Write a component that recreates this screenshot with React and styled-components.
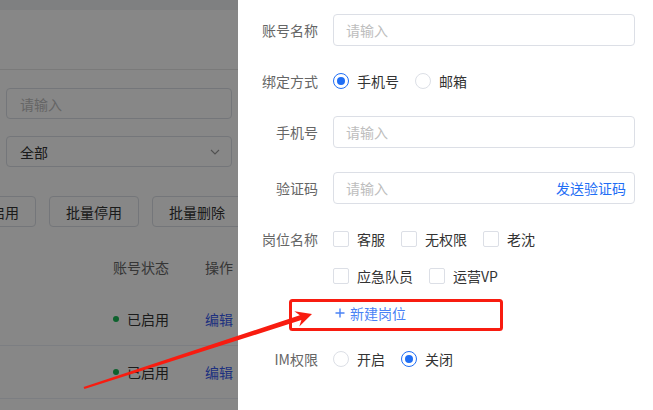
import React from 'react';
import styled, { createGlobalStyle } from 'styled-components';

const blue = '#1f6ef5';

const GlobalStyle = createGlobalStyle`
  html, body {
    margin: 0;
    padding: 0;
    width: 653px;
    height: 410px;
    overflow: hidden;
    background: #fff;
  }
  body {
    font-family: "Noto Sans CJK SC", "Noto Sans", sans-serif;
    font-size: 14px;
    color: #333;
  }
  * { box-sizing: border-box; }
`;

function Chevron() {
  return (
    <svg width="12" height="12" viewBox="0 0 12 12">
      <polyline points="2,4 6,8 10,4" fill="none" stroke="#999" strokeWidth="1.1" />
    </svg>
  );
}

function Plus() {
  return (
    <svg width="10" height="10" viewBox="0 0 10 10">
      <path d="M5 0.5V9.5M0.5 5H9.5" stroke="#4a82f5" strokeWidth="1.4" />
    </svg>
  );
}

function Annotation() {
  return (
    <Marks viewBox="0 0 653 410">
      <rect x="290.5" y="300.5" width="211" height="29" rx="2" fill="none" stroke="#f81c10" strokeWidth="3" />
      <polygon
        fill="#f81c10"
        points="84.4,389 83.6,387 299.8,315.3 294.3,311.3 312,314 299.3,326.5 301.4,320.1"
      />
    </Marks>
  );
}

const rows = [1, 2];

export default function App() {
  return (
    <Page>
      <GlobalStyle />
      <TopStrip />
      <Header />
      <Filters>
        <FilterBox $muted>请输入</FilterBox>
        <FilterBox>
          全部
          <Chevron />
        </FilterBox>
      </Filters>
      <Toolbar>
        <BatchButton>批量启用</BatchButton>
        <BatchButton>批量停用</BatchButton>
        <BatchButton>批量删除</BatchButton>
      </Toolbar>
      <Table>
        <TableRow $head>
          <span />
          <span>账号状态</span>
          <span>操作</span>
        </TableRow>
        {rows.map((r) => (
          <TableRow key={r}>
            <span />
            <Status>
              <Dot />
              已启用
            </Status>
            <EditLink>编辑</EditLink>
          </TableRow>
        ))}
      </Table>

      <Mask />

      <Drawer>
        <FormItem $mb={19}>
          <Label>账号名称</Label>
          <Control>
            <TextBox>
              <Placeholder>请输入</Placeholder>
            </TextBox>
          </Control>
        </FormItem>

        <FormItem $mb={19}>
          <Label>绑定方式</Label>
          <Control>
            <ChoiceLine>
              <Choice>
                <Radio $on />
                手机号
              </Choice>
              <Choice>
                <Radio />
                邮箱
              </Choice>
            </ChoiceLine>
          </Control>
        </FormItem>

        <FormItem $mb={24}>
          <Label>手机号</Label>
          <Control>
            <TextBox>
              <Placeholder>请输入</Placeholder>
            </TextBox>
          </Control>
        </FormItem>

        <FormItem $mb={19}>
          <Label>验证码</Label>
          <Control>
            <TextBox>
              <Placeholder>请输入</Placeholder>
              <SendCode>发送验证码</SendCode>
            </TextBox>
          </Control>
        </FormItem>

        <FormItem $mb={14}>
          <Label>岗位名称</Label>
          <Control>
            <ChoiceLine $gap>
              <Choice><Check />客服</Choice>
              <Choice><Check />无权限</Choice>
              <Choice><Check />老沈</Choice>
            </ChoiceLine>
            <ChoiceLine $gap>
              <Choice><Check />应急队员</Choice>
              <Choice><Check />运营VP</Choice>
            </ChoiceLine>
            <AddLink>
              <Plus />
              新建岗位
            </AddLink>
          </Control>
        </FormItem>

        <FormItem $mb={0}>
          <Label>IM权限</Label>
          <Control>
            <ChoiceLine>
              <Choice>
                <Radio />
                开启
              </Choice>
              <Choice>
                <Radio $on />
                关闭
              </Choice>
            </ChoiceLine>
          </Control>
        </FormItem>
      </Drawer>

      <Annotation />
    </Page>
  );
}

const Page = styled.div`
  position: relative;
  width: 653px;
  height: 410px;
  overflow: hidden;
  background: #fff;
`;

const TopStrip = styled.div`
  height: 10px;
  background: #f0f1f3;
`;

const Header = styled.div`
  height: 60px;
  background: #fff;
  border-bottom: 1px solid #e6e6e6;
`;

const Filters = styled.div`
  display: flex;
  flex-direction: column;
  gap: 17px;
  width: 232px;
  padding: 18px 0 0 6px;
`;

const FilterBox = styled.div`
  height: 31px;
  border: 1px solid #dcdfe6;
  border-radius: 4px;
  padding: 0 10px 0 13px;
  display: flex;
  align-items: center;
  justify-content: space-between;
  line-height: 20px;
  color: ${(p) => (p.$muted ? '#c0c0c0' : '#333')};
`;

const Toolbar = styled.div`
  display: flex;
  gap: 13px;
  margin: 29px 0 0 -54px;
`;

const BatchButton = styled.div`
  flex: none;
  width: 90px;
  height: 31px;
  border: 1px solid #dcdfe6;
  border-radius: 4px;
  display: flex;
  align-items: center;
  justify-content: center;
  color: #333;
  line-height: 20px;
`;

const Table = styled.div`
  margin-top: 13px;
`;

const TableRow = styled.div`
  display: grid;
  grid-template-columns: 113px 92px 1fr;
  align-items: center;
  height: 53px;
  border-bottom: ${(p) => (p.$head ? 'none' : '1px solid #ebeef5')};
  color: ${(p) => (p.$head ? '#666' : '#333')};
  line-height: 20px;
`;

const Status = styled.span`
  display: flex;
  align-items: center;
  gap: 8px;
`;

const Dot = styled.span`
  width: 6px;
  height: 6px;
  border-radius: 50%;
  background: #19b955;
`;

const EditLink = styled.span`
  color: #3a5cf0;
`;

const Mask = styled.div`
  position: absolute;
  inset: 0;
  background: rgba(0, 0, 0, 0.47);
  z-index: 1;
`;

const Drawer = styled.div`
  position: absolute;
  top: 0;
  right: 0;
  bottom: 0;
  width: 415px;
  background: #fff;
  z-index: 2;
  padding: 14px 18px 0 20px;
`;

const FormItem = styled.div`
  display: flex;
  align-items: flex-start;
  margin-bottom: ${(p) => p.$mb}px;
`;

const Label = styled.div`
  flex: none;
  width: 60px;
  margin-right: 15px;
  text-align: right;
  line-height: 32px;
  color: #666;
  white-space: nowrap;
`;

const Control = styled.div`
  flex: 1;
  min-width: 0;
`;

const TextBox = styled.div`
  height: 32px;
  border: 1px solid #dcdfe6;
  border-radius: 4px;
  padding: 0 8px 0 12px;
  display: flex;
  align-items: center;
  justify-content: space-between;
  line-height: 20px;
`;

const Placeholder = styled.span`
  color: #bdbdbd;
`;

const SendCode = styled.span`
  color: ${blue};
`;

const ChoiceLine = styled.div`
  display: flex;
  align-items: center;
  height: 32px;
  margin-bottom: ${(p) => (p.$gap ? '5px' : '0')};
  line-height: 20px;
`;

const Choice = styled.label`
  display: flex;
  align-items: center;
  gap: 8px;
  margin-right: 16px;
  color: #333;
`;

const Radio = styled.span`
  position: relative;
  width: 16px;
  height: 16px;
  border-radius: 50%;
  border: 1px solid ${(p) => (p.$on ? blue : '#dcdfe6')};
  background: #fff;

  &::after {
    content: '';
    display: ${(p) => (p.$on ? 'block' : 'none')};
    position: absolute;
    left: 3px;
    top: 3px;
    width: 8px;
    height: 8px;
    border-radius: 50%;
    background: ${blue};
  }
`;

const Check = styled.span`
  width: 16px;
  height: 16px;
  border: 1px solid #dcdfe6;
  border-radius: 2px;
  background: #fff;
`;

const AddLink = styled.div`
  display: flex;
  align-items: center;
  gap: 5px;
  height: 32px;
  padding-left: 2px;
  color: #4a82f5;
  line-height: 20px;
`;

const Marks = styled.svg`
  position: absolute;
  inset: 0;
  width: 653px;
  height: 410px;
  z-index: 3;
  pointer-events: none;
`;
